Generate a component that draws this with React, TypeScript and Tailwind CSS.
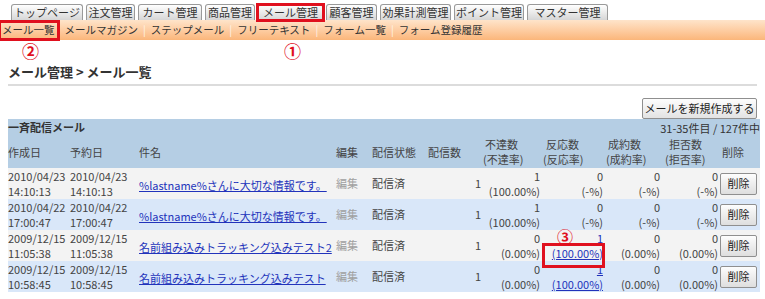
import React from 'react';

const font = { fontFamily: '"Noto Sans CJK JP", "Noto Sans", sans-serif' };

const tabs = [
  { label: 'トップページ', w: 'w-[72px]' },
  { label: '注文管理', w: 'w-[49px]' },
  { label: 'カート管理', w: 'w-[64px]' },
  { label: '商品管理', w: 'w-[50px]' },
  { label: 'メール管理', w: 'w-[65px]', marked: true },
  { label: '顧客管理', w: 'w-[51px]' },
  { label: '効果計測管理', w: 'w-[71px]' },
  { label: 'ポイント管理', w: 'w-[70px]' },
  { label: 'マスター管理', w: 'w-[81px]' },
];

const subMenu = ['メールマガジン', 'ステップメール', 'フリーテキスト', 'フォーム一覧', 'フォーム登録履歴'];

type Row = {
  created: [string, string];
  subject: string;
  bounce: [string, string];
  resp: [string, string];
  conv: [string, string];
  refuse: [string, string];
  respLink?: boolean;
};

const rows: Row[] = [
  {
    created: ['2010/04/23', '14:10:13'],
    subject: '%lastname%さんに大切な情報です。',
    bounce: ['1', '(100.00%)'],
    resp: ['0', '(-%)'],
    conv: ['0', '(-%)'],
    refuse: ['0', '(-%)'],
  },
  {
    created: ['2010/04/22', '17:00:47'],
    subject: '%lastname%さんに大切な情報です。',
    bounce: ['1', '(100.00%)'],
    resp: ['0', '(-%)'],
    conv: ['0', '(-%)'],
    refuse: ['0', '(-%)'],
  },
  {
    created: ['2009/12/15', '11:05:38'],
    subject: '名前組み込みトラッキング込みテスト2',
    bounce: ['0', '(0.00%)'],
    resp: ['1', '(100.00%)'],
    conv: ['0', '(0.00%)'],
    refuse: ['0', '(0.00%)'],
    respLink: true,
  },
  {
    created: ['2009/12/15', '10:58:45'],
    subject: '名前組み込みトラッキング込みテスト',
    bounce: ['0', '(0.00%)'],
    resp: ['1', '(100.00%)'],
    conv: ['0', '(0.00%)'],
    refuse: ['0', '(0.00%)'],
    respLink: true,
  },
];

const TwoLine: React.FC<{ v: [string, string]; link?: boolean }> = ({ v, link }) => (
  <div className={link ? 'text-[#2233bb] underline' : ''}>
    <div>{v[0]}</div>
    <div>{v[1]}</div>
  </div>
);

export default function App() {
  return (
    <div className="relative w-[765px] h-[299px] overflow-hidden bg-white text-[11px] text-[#444]" style={font}>
      {/* tabs */}
      <div className="flex gap-[3px] pl-[11px] pt-[4px]">
        {tabs.map((t) => (
          <div
            key={t.label}
            className={`relative ${t.w} h-[16px] flex items-center justify-center rounded-t-[3px] border border-b-0 border-[#9a9a9a] bg-gradient-to-b from-[#ffffff] to-[#d6d6d6] text-[11px] leading-none text-[#333]`}
          >
            {t.label}
            {t.marked && <span className="absolute -left-[3px] -right-[3px] -top-[2px] -bottom-[2px] border-[3px] border-[#e0101e]" />}
          </div>
        ))}
      </div>

      {/* sub menu */}
      <div className="h-[20px] flex items-center bg-gradient-to-b from-[#fee4ca] to-[#fbb67a] text-[#333] text-[10.5px] leading-none">
        <span className="relative pl-[2px] pr-[10px]">
          メール一覧
          <span className="absolute -left-[2px] right-[5px] -top-[5px] -bottom-[6px] border-[3px] border-[#e0101e]" />
        </span>
        {subMenu.map((s, i) => (
          <React.Fragment key={s}>
            {i > 0 && <span className="px-[5px] text-[#fff4e8]">|</span>}
            <span>{s}</span>
          </React.Fragment>
        ))}
      </div>

      {/* title */}
      <div className="mx-2 mt-[23px] pb-[3px] border-b-2 border-[#dcdcdc]">
        <h1 className="text-[13px] leading-[18px] font-bold text-[#333]">メール管理 &gt; メール一覧</h1>
      </div>

      <div className="flex justify-end pr-[8px] mt-[12px]">
        <button className="w-[115px] h-[21px] border border-[#8f8f8f] rounded-[2px] bg-gradient-to-b from-[#fdfdfd] to-[#e3e3e3] text-[11px] text-[#222] leading-none">
          メールを新規作成する
        </button>
      </div>

      {/* table */}
      <div className="ml-2 w-[752px]">
        <div className="h-[17px] flex justify-between items-end bg-[#b5cee4] text-[#333] leading-[15px]">
          <span className="font-bold self-start pt-[1px]">一斉配信メール</span>
          <span>31-35件目 / 127件中</span>
        </div>
        <table className="table-fixed w-[752px] border-collapse leading-[15px]">
          <colgroup>
            <col className="w-[61px]" />
            <col className="w-[68px]" />
            <col className="w-[197px]" />
            <col className="w-[34px]" />
            <col className="w-[57px]" />
            <col className="w-[57px]" />
            <col className="w-[60px]" />
            <col className="w-[63px]" />
            <col className="w-[58px]" />
            <col className="w-[57px]" />
            <col className="w-[40px]" />
          </colgroup>
          <thead>
            <tr className="h-[32px] bg-[#b5cee4] text-left text-[#444] font-normal">
              <th className="font-normal p-0">作成日</th>
              <th className="font-normal p-0 pl-[1px]">予約日</th>
              <th className="font-normal p-0 pl-[2px]">件名</th>
              <th className="font-normal p-0 pl-[2px]">編集</th>
              <th className="font-normal p-0 pl-[4px]">配信状態</th>
              <th className="font-normal p-0 pl-[3px]">配信数</th>
              <th className="font-normal p-0 pl-[1px]">
                <div className="pl-[2px]">不達数</div>
                <div>(不達率)</div>
              </th>
              <th className="font-normal p-0 pl-[1px]">
                <div className="pl-[3px]">反応数</div>
                <div>(反応率)</div>
              </th>
              <th className="font-normal p-0 pl-[1px]">
                <div className="pl-[2px]">成約数</div>
                <div>(成約率)</div>
              </th>
              <th className="font-normal p-0 pl-[2px]">
                <div className="pl-[4px]">拒否数</div>
                <div>(拒否率)</div>
              </th>
              <th className="font-normal p-0 pl-[2px]">削除</th>
            </tr>
          </thead>
          <tbody>
            {rows.map((r, i) => (
              <tr key={i} className={`h-[31px] ${i % 2 === 0 ? 'bg-[#f3f3f3]' : 'bg-[#d9e7f9]'}`}>
                <td className="p-0 align-middle">
                  <div>{r.created[0]}</div>
                  <div>{r.created[1]}</div>
                </td>
                <td className="p-0 pl-[1px] align-middle">
                  <div>{r.created[0]}</div>
                  <div>{r.created[1]}</div>
                </td>
                <td className="p-0 pl-[2px] pt-[3px] align-middle">
                  <a className="text-[#2233bb] underline whitespace-nowrap">{r.subject}</a>
                </td>
                <td className="p-0 pl-[2px] align-middle text-[#a0a0a0]">編集</td>
                <td className="p-0 pl-[4px] align-middle">配信済</td>
                <td className="p-0 pr-[1px] align-middle text-right">1</td>
                <td className="p-0 pr-[2px] align-middle text-right">
                  <TwoLine v={r.bounce} />
                </td>
                <td className="p-0 pr-[2px] align-middle text-right">
                  <TwoLine v={r.resp} link={r.respLink} />
                </td>
                <td className="p-0 pr-[3px] align-middle text-right">
                  <TwoLine v={r.conv} />
                </td>
                <td className="p-0 pr-[2px] align-middle text-right">
                  <TwoLine v={r.refuse} />
                </td>
                <td className="p-0 align-middle">
                  <button className="w-[37px] h-[22px] border border-[#8f8f8f] rounded-[2px] bg-gradient-to-b from-[#fdfdfd] to-[#dedede] text-[11px] text-[#222] leading-none">
                    削除
                  </button>
                </td>
              </tr>
            ))}
          </tbody>
        </table>
      </div>

      {/* annotations */}
      <span className="absolute left-[22px] top-[42px] text-[17px] font-bold leading-[17px] text-[#e0101e]">②</span>
      <span className="absolute left-[284px] top-[42px] text-[17px] font-bold leading-[17px] text-[#e0101e]">①</span>
      <span className="absolute left-[557px] top-[228px] text-[16px] font-bold leading-[16px] text-[#e0101e]">③</span>
      <span className="absolute left-[542px] top-[243px] w-[63px] h-[25px] border-[3px] border-[#e0101e]" />
    </div>
  );
}
